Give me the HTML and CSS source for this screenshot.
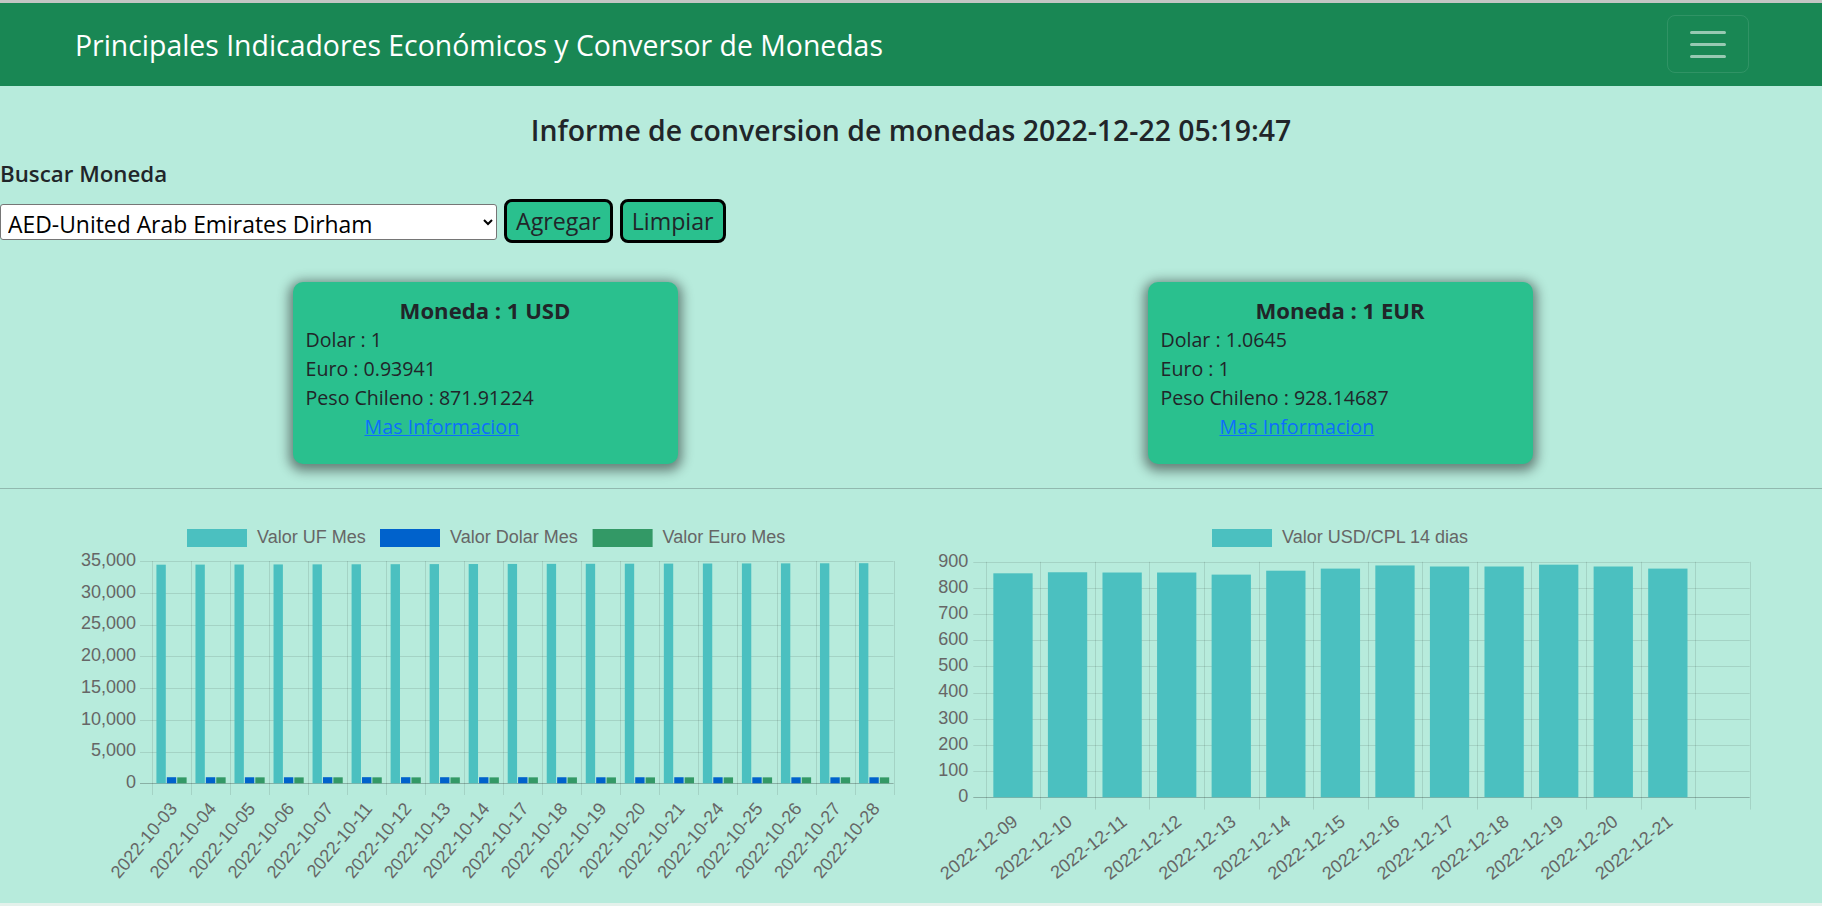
FILE: index.html
```html
<!DOCTYPE html>
<html lang="es">
<head>
<meta charset="utf-8">
<title>Indicadores Económicos</title>
<link rel="stylesheet" href="styles.css">
</head>
<body>
<div class="window-edge"></div>
<nav class="navbar">
  <span class="brand">Principales Indicadores Económicos y Conversor de Monedas</span>
  <button class="toggler" type="button" aria-label="Menú">
    <svg width="38" height="30" viewBox="0 0 38 30"><path d="M2.5 3.5h33M2.5 15.5h33M2.5 27.5h33" stroke="currentColor" stroke-width="3" stroke-linecap="round" fill="none"/></svg>
  </button>
</nav>
<main>
  <h4 class="report-title">Informe de conversion de monedas 2022-12-22 05:19:47</h4>
  <section class="search">
    <label class="search-label" for="moneda">Buscar Moneda</label>
    <div class="search-row">
      <select id="moneda" class="select"><option>AED-United Arab Emirates Dirham</option></select>
      <button class="btn" type="button">Agregar</button>
      <button class="btn" type="button">Limpiar</button>
    </div>
  </section>
  <section class="cards">
    <div class="card">
      <h5 class="card-title">Moneda : 1 USD</h5>
      <p class="card-line">Dolar : 1</p>
      <p class="card-line">Euro : 0.93941</p>
      <p class="card-line">Peso Chileno : 871.91224</p>
      <a class="card-link" href="#">Mas Informacion</a>
    </div>
    <div class="card">
      <h5 class="card-title">Moneda : 1 EUR</h5>
      <p class="card-line">Dolar : 1.0645</p>
      <p class="card-line">Euro : 1</p>
      <p class="card-line">Peso Chileno : 928.14687</p>
      <a class="card-link" href="#">Mas Informacion</a>
    </div>
  </section>
  <hr class="divider">
  <section class="charts">
    <svg id="chart-uf" class="chart" width="911" height="414" viewBox="0 0 911 414"></svg>
    <svg id="chart-usd" class="chart" width="911" height="414" viewBox="0 0 911 414"></svg>
  </section>
  <div class="bottom-edge"></div>
</main>
<script src="app.js"></script>
</body>
</html>
```

FILE: styles.css
```css
* { box-sizing: border-box; }
html, body { margin: 0; }
body {
  background: #b7ebdc;
  font-family: "Open Sans", "Noto Sans", sans-serif;
  color: #212529;
  font-size: 19.6px;
  line-height: 29px;
  height: 906px;
  overflow: hidden;
}
.window-edge { height: 3px; background: #c3c6c4; }
.navbar {
  height: 83px;
  background: #198754;
  display: flex;
  align-items: center;
  justify-content: space-between;
  padding: 0 73px 0 75px;
}
.brand { color: #fff; font-size: 28.4px; line-height: 34px; }
.toggler {
  width: 82px;
  height: 58px;
  display: flex;
  align-items: center;
  justify-content: center;
  background: transparent;
  border: 1px solid rgba(255,255,255,.1);
  border-radius: 8px;
  color: rgba(255,255,255,.55);
  padding: 0;
  margin-top: -2px;
}
.report-title {
  margin: 27px 0 0;
  text-align: center;
  font-size: 28.4px;
  font-weight: 600;
  line-height: 34.5px;
}
.search-label {
  display: block;
  margin-top: 14px;
  font-size: 22.3px;
  font-weight: 600;
  line-height: 24px;
}
.search-row { display: flex; align-items: center; gap: 7px; margin-top: 13px; }
.select {
  width: 497px;
  height: 36px;
  font-family: inherit;
  font-size: 22.9px;
  color: #000;
  background: #fff;
  border: 1px solid #767676;
  border-radius: 3px;
  padding: 3px 3px 0;
  margin-top: 2px;
}
.btn {
  height: 44px;
  background: #2ac08e;
  border: 3px solid #000;
  border-radius: 8px;
  font-family: inherit;
  font-size: 23.2px;
  line-height: 30px;
  color: #212529;
  padding: 0 9px;
}
.cards { display: flex; justify-content: center; gap: 470px; margin-top: 39px; padding-left: 3px; }
.card {
  width: 385px;
  height: 182px;
  background: #2ac08e;
  border-radius: 10px;
  box-shadow: 0 3px 12px 4px rgba(0,0,0,.45);
  padding: 14px 13px 0;
}
.card-title { margin: 0; text-align: center; font-size: 22.1px; font-weight: 700; line-height: 29px; }
.card-line { margin: 0; }
.card-link { display: inline-block; margin-left: 59px; font-size: 19.7px; color: #0d6efd; text-decoration: underline; }
.divider { margin: 24px 0 0; border: 0; border-top: 1px solid #91b9af; }
.charts { display: flex; }
.chart { display: block; width: 911px; height: 414px; }
.chart .tick { font-family: "Liberation Sans", Arial, sans-serif; font-size: 18px; fill: #666; }
.bottom-edge { height: 3px; background: #e4f1eb; }
```

FILE: app.js
```js
const NS = 'http://www.w3.org/2000/svg';
function el(tag, attrs, parent, text) {
  const e = document.createElementNS(NS, tag);
  for (const k in attrs) e.setAttribute(k, attrs[k]);
  if (text != null) e.textContent = text;
  parent.appendChild(e);
  return e;
}
function px(v) { return Math.round(v) + 0.5; }

function drawChart(svg, c) {
  const grid = 'rgba(0,0,0,0.1)', zero = 'rgba(0,0,0,0.25)';
  const h = c.bottom - c.top;
  const steps = Math.round(c.max / c.step);
  const n = c.labels.length, cw = (c.right - c.left) / n;
  for (let i = 0; i <= n; i++) {
    const x = px(c.left + cw * i);
    el('line', { x1: x, x2: x, y1: c.top, y2: c.tickBottom, stroke: grid }, svg);
  }
  for (let i = 0; i <= steps; i++) {
    const v = i * c.step, y = c.bottom - h * v / c.max;
    el('line', { x1: c.gridStart, x2: c.right, y1: px(y), y2: px(y), stroke: i === 0 ? zero : grid }, svg);
    el('text', { x: c.labelRight, y: y, 'text-anchor': 'end', 'dominant-baseline': 'middle', class: 'tick' }, svg, v.toLocaleString('en-US'));
  }
  const nd = c.datasets.length, slot = cw * 0.8 / nd, bw = slot * 0.9;
  c.datasets.forEach((ds, d) => {
    ds.data.forEach((v, i) => {
      if (v == null) return;
      const x0 = c.left + cw * i + cw * 0.1 + slot * d + (slot - bw) / 2;
      const y = c.bottom - h * v / c.max;
      el('rect', { x: x0, y: y, width: bw, height: c.bottom - y, fill: ds.color }, svg);
    });
  });
  c.labels.forEach((lb, i) => {
    if (!lb) return;
    const cx = c.left + cw * (i + 0.5);
    el('text', { class: 'tick', 'text-anchor': 'end', 'dominant-baseline': 'middle',
      transform: `translate(${cx + c.labelDx},${c.labelY}) rotate(${-c.rot})` }, svg, lb);
  });
  c.datasets.forEach(ds => {
    el('rect', { x: ds.lx, y: 40, width: 60, height: 18, fill: ds.color }, svg);
    el('text', { x: ds.lx + 70, y: 49, 'dominant-baseline': 'middle', class: 'tick' }, svg, ds.label);
  });
}

const ufLabels = ['2022-10-03','2022-10-04','2022-10-05','2022-10-06','2022-10-07','2022-10-11','2022-10-12','2022-10-13','2022-10-14','2022-10-17','2022-10-18','2022-10-19','2022-10-20','2022-10-21','2022-10-24','2022-10-25','2022-10-26','2022-10-27','2022-10-28'];
const uf = ufLabels.map((_, i) => 34420 + i * 13);
const usd = [958, 955, 949, 951, 962, 965, 960, 957, 958, 963, 952, 948, 952, 955, 949, 945, 944, 942, 946];
const eur = [936, 944, 938, 933, 941, 938, 935, 934, 932, 938, 934, 929, 932, 939, 935, 934, 941, 942, 934];

drawChart(document.getElementById('chart-uf'), {
  left: 152, right: 893.6, top: 72, bottom: 294.3, max: 35000, step: 5000,
  gridStart: 140, labelRight: 136, tickBottom: 306, rot: 50, labelDx: 3, labelY: 317,
  labels: ufLabels,
  datasets: [
    { label: 'Valor UF Mes', color: '#4bc0c0', data: uf, lx: 187 },
    { label: 'Valor Dolar Mes', color: '#0062cc', data: usd, lx: 380 },
    { label: 'Valor Euro Mes', color: '#339966', data: eur, lx: 592.6 }
  ]
});

const dLabels = ['2022-12-09','2022-12-10','2022-12-11','2022-12-12','2022-12-13','2022-12-14','2022-12-15','2022-12-16','2022-12-17','2022-12-18','2022-12-19','2022-12-20','2022-12-21',''];
drawChart(document.getElementById('chart-usd'), {
  left: 74.7, right: 838.7, top: 72.8, bottom: 308.3, max: 900, step: 100,
  gridStart: 62.3, labelRight: 57.3, tickBottom: 320.6, rot: 38, labelDx: 3, labelY: 331,
  labels: dLabels,
  datasets: [
    { label: 'Valor USD/CPL 14 dias', color: '#4bc0c0', data: [856,860,859,859,851,866,874,886,882,882,889,882,874,null], lx: 301 }
  ]
});
```
